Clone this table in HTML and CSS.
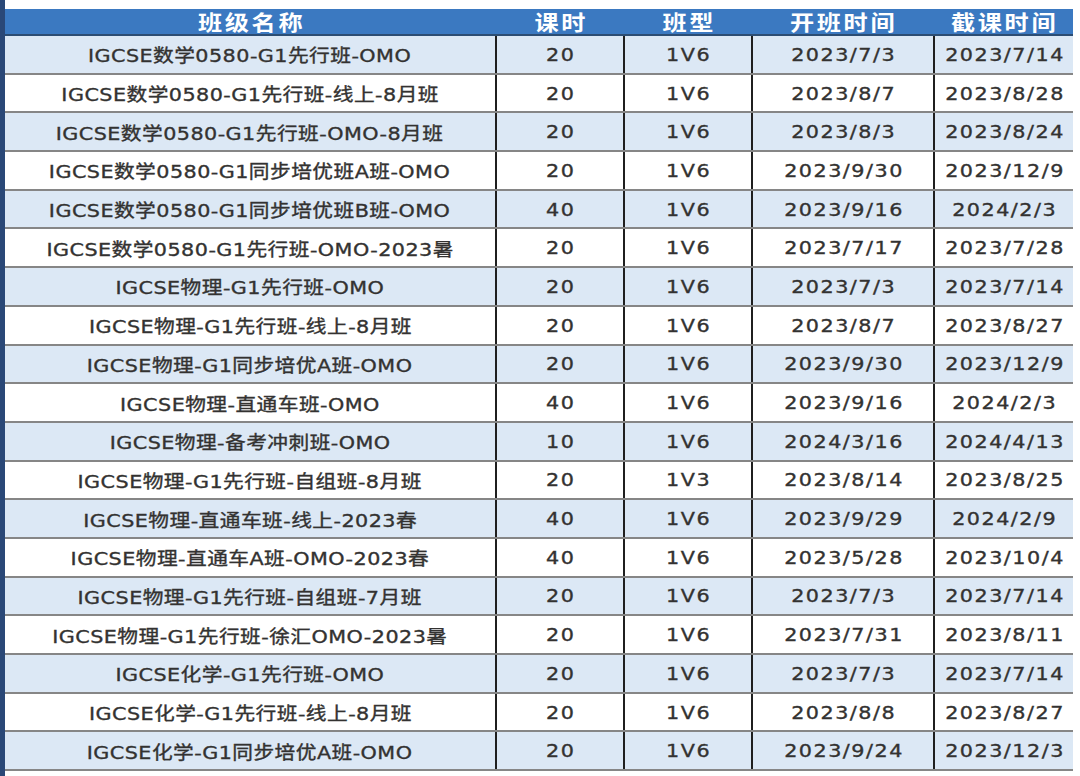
FILE: index.html
```html
<!DOCTYPE html>
<html lang="zh-CN">
<head>
<meta charset="utf-8">
<title>班级列表</title>
<link rel="stylesheet" href="styles.css">
</head>
<body>
<div class="page">
  <div class="side"></div>
  <div class="sheet">
    <table class="grid">
      <colgroup>
        <col class="c-name"><col class="c-hours"><col class="c-type"><col class="c-start"><col class="c-end">
      </colgroup>
      <thead>
        <tr><th><span class="t">班级名称</span></th><th><span class="t">课时</span></th><th><span class="t">班型</span></th><th><span class="t">开班时间</span></th><th><span class="t">截课时间</span></th></tr>
      </thead>
      <tbody>
        <tr><td><span class="t">IGCSE数学0580-G1先行班-OMO</span></td><td><span class="t">20</span></td><td><span class="t">1V6</span></td><td><span class="t">2023/7/3</span></td><td><span class="t">2023/7/14</span></td></tr>
        <tr><td><span class="t">IGCSE数学0580-G1先行班-线上-8月班</span></td><td><span class="t">20</span></td><td><span class="t">1V6</span></td><td><span class="t">2023/8/7</span></td><td><span class="t">2023/8/28</span></td></tr>
        <tr><td><span class="t">IGCSE数学0580-G1先行班-OMO-8月班</span></td><td><span class="t">20</span></td><td><span class="t">1V6</span></td><td><span class="t">2023/8/3</span></td><td><span class="t">2023/8/24</span></td></tr>
        <tr><td><span class="t">IGCSE数学0580-G1同步培优班A班-OMO</span></td><td><span class="t">20</span></td><td><span class="t">1V6</span></td><td><span class="t">2023/9/30</span></td><td><span class="t">2023/12/9</span></td></tr>
        <tr><td><span class="t">IGCSE数学0580-G1同步培优班B班-OMO</span></td><td><span class="t">40</span></td><td><span class="t">1V6</span></td><td><span class="t">2023/9/16</span></td><td><span class="t">2024/2/3</span></td></tr>
        <tr><td><span class="t">IGCSE数学0580-G1先行班-OMO-2023暑</span></td><td><span class="t">20</span></td><td><span class="t">1V6</span></td><td><span class="t">2023/7/17</span></td><td><span class="t">2023/7/28</span></td></tr>
        <tr><td><span class="t">IGCSE物理-G1先行班-OMO</span></td><td><span class="t">20</span></td><td><span class="t">1V6</span></td><td><span class="t">2023/7/3</span></td><td><span class="t">2023/7/14</span></td></tr>
        <tr><td><span class="t">IGCSE物理-G1先行班-线上-8月班</span></td><td><span class="t">20</span></td><td><span class="t">1V6</span></td><td><span class="t">2023/8/7</span></td><td><span class="t">2023/8/27</span></td></tr>
        <tr><td><span class="t">IGCSE物理-G1同步培优A班-OMO</span></td><td><span class="t">20</span></td><td><span class="t">1V6</span></td><td><span class="t">2023/9/30</span></td><td><span class="t">2023/12/9</span></td></tr>
        <tr><td><span class="t">IGCSE物理-直通车班-OMO</span></td><td><span class="t">40</span></td><td><span class="t">1V6</span></td><td><span class="t">2023/9/16</span></td><td><span class="t">2024/2/3</span></td></tr>
        <tr><td><span class="t">IGCSE物理-备考冲刺班-OMO</span></td><td><span class="t">10</span></td><td><span class="t">1V6</span></td><td><span class="t">2024/3/16</span></td><td><span class="t">2024/4/13</span></td></tr>
        <tr><td><span class="t">IGCSE物理-G1先行班-自组班-8月班</span></td><td><span class="t">20</span></td><td><span class="t">1V3</span></td><td><span class="t">2023/8/14</span></td><td><span class="t">2023/8/25</span></td></tr>
        <tr><td><span class="t">IGCSE物理-直通车班-线上-2023春</span></td><td><span class="t">40</span></td><td><span class="t">1V6</span></td><td><span class="t">2023/9/29</span></td><td><span class="t">2024/2/9</span></td></tr>
        <tr><td><span class="t">IGCSE物理-直通车A班-OMO-2023春</span></td><td><span class="t">40</span></td><td><span class="t">1V6</span></td><td><span class="t">2023/5/28</span></td><td><span class="t">2023/10/4</span></td></tr>
        <tr><td><span class="t">IGCSE物理-G1先行班-自组班-7月班</span></td><td><span class="t">20</span></td><td><span class="t">1V6</span></td><td><span class="t">2023/7/3</span></td><td><span class="t">2023/7/14</span></td></tr>
        <tr><td><span class="t">IGCSE物理-G1先行班-徐汇OMO-2023暑</span></td><td><span class="t">20</span></td><td><span class="t">1V6</span></td><td><span class="t">2023/7/31</span></td><td><span class="t">2023/8/11</span></td></tr>
        <tr><td><span class="t">IGCSE化学-G1先行班-OMO</span></td><td><span class="t">20</span></td><td><span class="t">1V6</span></td><td><span class="t">2023/7/3</span></td><td><span class="t">2023/7/14</span></td></tr>
        <tr><td><span class="t">IGCSE化学-G1先行班-线上-8月班</span></td><td><span class="t">20</span></td><td><span class="t">1V6</span></td><td><span class="t">2023/8/8</span></td><td><span class="t">2023/8/27</span></td></tr>
        <tr><td><span class="t">IGCSE化学-G1同步培优A班-OMO</span></td><td><span class="t">20</span></td><td><span class="t">1V6</span></td><td><span class="t">2023/9/24</span></td><td><span class="t">2023/12/3</span></td></tr>
      </tbody>
    </table>
  </div>
</div>
</body>
</html>
```

FILE: styles.css
```css
html, body {
  margin: 0;
  padding: 0;
  background: #ffffff;
}

.page {
  display: flex;
  width: 1080px;
  height: 776px;
  overflow: hidden;
}

.side {
  flex: 0 0 5px;
  background: #2a4877;
}

.sheet {
  flex: 0 0 1068px;
  padding-top: 9px;
}

.grid {
  width: 1068px;
  table-layout: fixed;
  border-collapse: collapse;
  font-family: "DejaVu Sans", "Noto Sans CJK SC", sans-serif;
  font-weight: 400;
  color: #333231;
}

.c-name { width: 491px; }
.c-hours { width: 128px; }
.c-type { width: 128px; }
.c-start { width: 182px; }
.c-end { width: 139px; }

.t {
  display: inline-block;
  transform: scaleX(1.15);
  transform-origin: center;
}

.grid th {
  height: 25px;
  padding: 0 0 0 2px;
  background: #3b79c1;
  color: #ffffff;
  font-family: "Noto Sans CJK SC", sans-serif;
  font-weight: 700;
  font-size: 21px;
  line-height: 25px;
  letter-spacing: 2.3px;
  text-align: center;
  border-bottom: 2px solid #2c4d73;
  white-space: nowrap;
}

.grid td {
  height: 36.7px;
  padding: 0;
  font-size: 18px;
  letter-spacing: 0.4px;
  text-align: center;
  white-space: nowrap;
  border-bottom: 2px solid #868686;
  -webkit-text-stroke: 0.35px #333231;
}

.grid td + td {
  border-left: 2px solid #1f1f1f;
  letter-spacing: 1.3px;
  padding-left: 2px;
}

.grid tbody tr:nth-child(odd) td {
  background: #dce8f5;
}

.grid tbody tr:nth-child(even) td {
  background: #ffffff;
}
```
